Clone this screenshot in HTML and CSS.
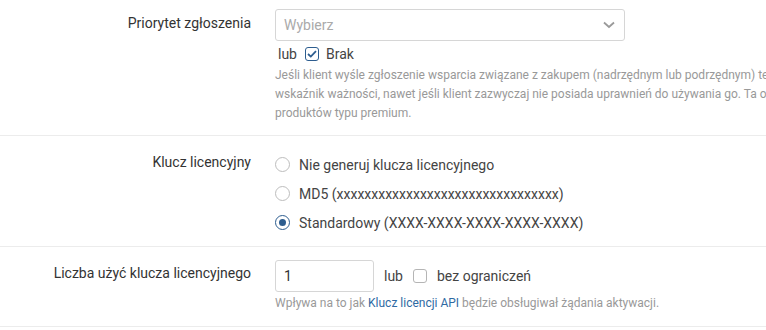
FILE: index.html
```html
<!DOCTYPE html>
<html lang="pl">
<head>
    <meta charset="UTF-8">
    <title>Ustawienia produktu</title>
    <link rel="stylesheet" href="styles.css">
</head>
<body>
    <div class="form">
        <!-- priorytet -->
        <div class="row row-priority">
            <label class="row-label">Priorytet zgłoszenia</label>
            <div class="row-field">
                <div class="select">
                    <span class="placeholder">Wybierz</span>
                    <svg class="chevron" width="12" height="8" viewBox="0 0 12 8"><path d="M1 1.5 L6 6 L11 1.5" fill="none" stroke="#9a9a9a" stroke-width="1.8"/></svg>
                </div>
                <div class="inline-opt opt-none">
                    <span>lub</span>
                    <span class="check checked">
                        <svg width="10" height="8" viewBox="0 0 10 8"><path d="M1 4 L3.8 6.6 L9 1.2" fill="none" stroke="#2d5d8f" stroke-width="1.8"/></svg>
                    </span>
                    <span>Brak</span>
                </div>
                <p class="help">Jeśli klient wyśle zgłoszenie wsparcia związane z zakupem (nadrzędnym lub podrzędnym) ten priorytet zostanie użyty jako<br>wskaźnik ważności, nawet jeśli klient zazwyczaj nie posiada uprawnień do używania go. Ta opcja jest przydatna w przypadku<br>produktów typu premium.</p>
            </div>
        </div>

        <!-- klucz -->
        <div class="row row-key">
            <label class="row-label">Klucz licencyjny</label>
            <div class="row-field">
                <div class="radio-item"><span class="radio"></span>Nie generuj klucza licencyjnego</div>
                <div class="radio-item"><span class="radio"></span>MD5 (xxxxxxxxxxxxxxxxxxxxxxxxxxxxxxxx)</div>
                <div class="radio-item"><span class="radio checked"></span>Standardowy (XXXX-XXXX-XXXX-XXXX-XXXX)</div>
            </div>
        </div>

        <!-- liczba uzyc -->
        <div class="row row-uses">
            <label class="row-label">Liczba użyć klucza licencyjnego</label>
            <div class="row-field">
                <div class="uses-line">
                    <div class="input">1</div>
                    <span class="or">lub</span>
                    <span class="check"></span>
                    <span>bez ograniczeń</span>
                </div>
                <p class="help">Wpływa na to jak <a href="#">Klucz licencji API</a> będzie obsługiwał żądania aktywacji.</p>
            </div>
        </div>
    </div>
</body>
</html>
```

FILE: styles.css
```css
html, body {
    margin: 0;
    padding: 0;
    background: #fff;
    overflow: hidden;
}
body {
    font-family: Roboto, "Liberation Sans", sans-serif;
    font-size: 14px;
    color: #444;
}

.row {
    display: grid;
    grid-template-columns: 251px 1fr;
    column-gap: 24px;
    border-bottom: 1px solid #ececec;
}
.row-label {
    text-align: right;
    line-height: 20px;
    color: #333;
}
.row-field {
    min-width: 0;
}

/* row 1 */
.row-priority {
    padding: 9px 0 12px;
}
.row-priority .row-label {
    padding-top: 4px;
}
.select {
    width: 350px;
    height: 32px;
    box-sizing: border-box;
    border: 1px solid #d6d6d6;
    border-radius: 3px;
    display: flex;
    align-items: center;
    justify-content: space-between;
    padding: 0 8px 0 8px;
}
.placeholder {
    color: #aaa;
}
.chevron {
    margin-right: 1px;
}
.inline-opt {
    display: flex;
    align-items: center;
    height: 20px;
    margin-top: 3px;
    padding-left: 3px;
}
.opt-none .check {
    margin: 0 7px 0 8px;
}
.check {
    width: 14px;
    height: 14px;
    box-sizing: border-box;
    border: 1px solid #b5b5b5;
    border-radius: 3px;
    display: inline-flex;
    align-items: center;
    justify-content: center;
}
.check.checked {
    border-color: #2d5d8f;
}
.help {
    margin: 2px 0 0;
    font-size: 12px;
    line-height: 19px;
    color: #999;
    white-space: nowrap;
}
.help a {
    color: #2f6aa3;
    text-decoration: none;
}

/* row 2 */
.row-key {
    padding: 14px 0 9px;
}
.row-key .row-label {
    padding-top: 2px;
}
.radio-item {
    display: flex;
    align-items: center;
    height: 29px;
}
.radio {
    width: 15px;
    height: 15px;
    box-sizing: border-box;
    border: 1px solid #bdbdbd;
    border-radius: 50%;
    margin-right: 9px;
    display: inline-flex;
    align-items: center;
    justify-content: center;
}
.radio.checked {
    border-color: #2d5d8f;
}
.radio.checked::after {
    content: "";
    width: 7px;
    height: 7px;
    border-radius: 50%;
    background: #2d5d8f;
}

/* row 3 */
.row-uses {
    padding: 13px 0 13px;
}
.row-uses .row-label {
    padding-top: 3px;
}
.uses-line {
    display: flex;
    align-items: center;
}
.input {
    width: 99px;
    height: 32px;
    box-sizing: border-box;
    border: 1px solid #d6d6d6;
    border-radius: 3px;
    padding: 0 8px;
    line-height: 30px;
    color: #333;
}
.or {
    margin: 0 10px 0 10px;
}
.uses-line .check {
    margin-right: 10px;
}
```
